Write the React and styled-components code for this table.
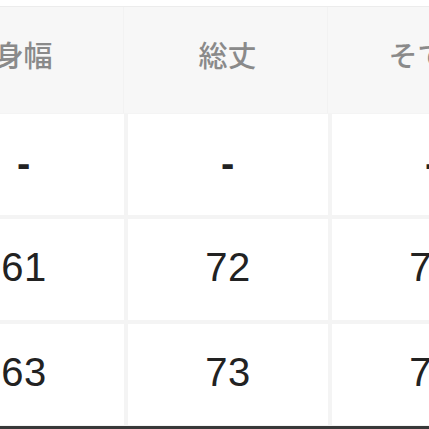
import React from 'react';
import styled, { createGlobalStyle } from 'styled-components';

const GlobalStyle = createGlobalStyle`
  html, body {
    margin: 0;
    padding: 0;
    background: #ffffff;
  }
  body {
    font-family: "Liberation Sans", "Noto Sans CJK JP", sans-serif;
  }
`;

const headers = ['身幅', '総丈', 'そで丈'];
const rows = [
  ['-', '-', '-'],
  ['61', '72', '78'],
  ['63', '73', '79'],
];

const Viewport = styled.div`
  width: 429px;
  height: 429px;
  overflow: hidden;
  background: #ffffff;
  padding-top: 6px;
  box-sizing: border-box;
  display: flex;
  flex-direction: column;
`;

const Table = styled.div`
  margin-left: -76px;
  width: 608px;
  background: #f4f4f4;
  border-top: 1px solid #ececec;
`;

const HeadRow = styled.div`
  display: grid;
  grid-template-columns: repeat(3, 200px);
  column-gap: 4px;
  height: 106px;
  background: #f7f7f7;
`;

const HeadCell = styled.div`
  display: flex;
  align-items: center;
  justify-content: center;
  font-family: "Noto Sans CJK JP", "Liberation Sans", sans-serif;
  font-size: 29px;
  font-weight: 500;
  color: #8a8a8a;
  padding-bottom: 12px;
  box-sizing: border-box;
  border-right: ${p => (p.$last ? 'none' : '1px solid #f2f2f2')};
`;

const Body = styled.div`
  display: grid;
  grid-template-columns: repeat(3, 200px);
  grid-auto-rows: 101px;
  column-gap: 4px;
  row-gap: 4px;
  padding-top: 1px;
  padding-bottom: 1px;
`;

const Cell = styled.div`
  background: #ffffff;
  display: flex;
  align-items: center;
  justify-content: center;
  font-size: 40px;
  font-weight: ${p => (p.$dash ? 700 : 400)};
  color: #222222;
  letter-spacing: 0.5px;
  padding-bottom: ${p => (p.$dash ? '2px' : '4px')};
  box-sizing: border-box;
`;

const Bottom = styled.div`
  height: 3px;
  background: #383838;
`;

export default function App() {
  return (
    <>
      <GlobalStyle />
      <Viewport>
        <Table>
          <HeadRow>
            {headers.map((h, i) => (
              <HeadCell key={h} $last={i === headers.length - 1}>
                {h}
              </HeadCell>
            ))}
          </HeadRow>
          <Body>
            {rows.map((r, ri) =>
              r.map((v, ci) => (
                <Cell key={`${ri}-${ci}`} $dash={v === '-'}>
                  {v}
                </Cell>
              ))
            )}
          </Body>
        </Table>
        <Bottom />
      </Viewport>
    </>
  );
}
